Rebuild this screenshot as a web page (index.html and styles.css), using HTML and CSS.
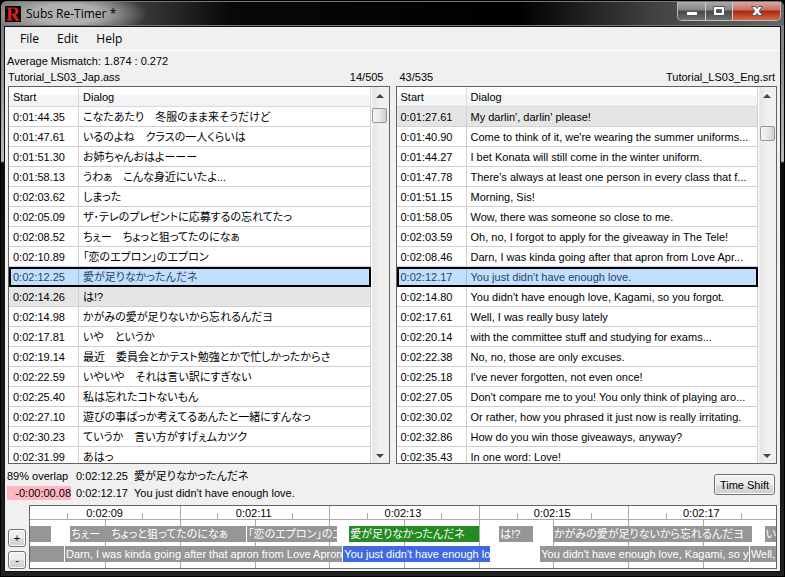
FILE: index.html
```html
<!DOCTYPE html>
<html lang="en">
<head>
<meta charset="utf-8">
<title>Subs Re-Timer *</title>
<link rel="stylesheet" href="styles.css">
</head>
<body>
<div class="window">
  <header class="titlebar">
    <svg class="logo" viewBox="0 0 16 16" aria-hidden="true"><rect width="16" height="16" fill="#050505"/><path d="M1.5 1.500H9c3 0 4.500 1.300 4.500 3.500 0 2-1.200 3.200-3 3.600l3.300 5.200H15v.9h-4.200L7.200 8.900H6.200v4.900h1.600v.9H1.500v-.9h1.700V2.400H1.500zM6.200 2.400V8h1.600c1.900 0 2.700-1 2.700-2.900S9.700 2.400 7.900 2.400z" fill="#e21b1b"/></svg>
    <h1 class="title">Subs Re-Timer *</h1>
    <div class="caption-buttons">
      <button class="cap" aria-label="Minimize"><svg width="12" height="12" viewBox="0 0 12 12"><rect x=".5" y="6.500" width="11" height="4" fill="#fff" stroke="#535666"/></svg></button>
      <button class="cap cap-max" aria-label="Maximize"><svg width="12" height="12" viewBox="0 0 12 12"><path d="M.5 1.500h11v9H.5zM3.500 4.500v3h5v-3z" fill="#fff" fill-rule="evenodd" stroke="#535666"/></svg></button>
      <button class="cap cap-close" aria-label="Close"><svg width="14" height="12" viewBox="0 0 14 12"><path d="M1.500 1.500h3.700L7 3.600l1.800-2.100h3.700L9.200 6l3.300 4.500H8.800L7 8.400l-1.800 2.100H1.500L4.800 6z" fill="#fff" stroke="#535666"/></svg></button>
    </div>
  </header>
  <main class="client">
    <nav class="menu">
      <button>File</button><button>Edit</button><button>Help</button>
    </nav>
    <p class="mismatch">Average Mismatch: 1.874 : 0.272</p>
    <div class="panes">
      <section class="pane">
        <div class="pane-head"><span>Tutorial_LS03_Jap.ass</span><span class="count">14/505</span></div>
        <div class="grid">
          <div class="rows">
            <table lang="ja">
              <thead><tr><th class="start">Start</th><th>Dialog</th></tr></thead>
              <tbody>
                <tr><td>0:01:44.35</td><td>こなたあたり　冬服のまま来そうだけど</td></tr>
                <tr><td>0:01:47.61</td><td>いるのよね　クラスの一人くらいは</td></tr>
                <tr><td>0:01:51.30</td><td>お姉ちゃんおはよーーー</td></tr>
                <tr><td>0:01:58.13</td><td>うわぁ　こんな身近にいたよ...</td></tr>
                <tr><td>0:02:03.62</td><td>しまった</td></tr>
                <tr><td>0:02:05.09</td><td>ザ･テレのプレゼントに応募するの忘れてたっ</td></tr>
                <tr><td>0:02:08.52</td><td>ちぇー　ちょっと狙ってたのになぁ</td></tr>
                <tr><td>0:02:10.89</td><td>「恋のエプロン」のエプロン</td></tr>
                <tr class="selected"><td>0:02:12.25</td><td>愛が足りなかったんだネ</td></tr>
                <tr class="marked"><td>0:02:14.26</td><td>は!?</td></tr>
                <tr><td>0:02:14.98</td><td>かがみの愛が足りないから忘れるんだヨ</td></tr>
                <tr><td>0:02:17.81</td><td>いや　というか</td></tr>
                <tr><td>0:02:19.14</td><td>最近　委員会とかテスト勉強とかで忙しかったからさ</td></tr>
                <tr><td>0:02:22.59</td><td>いやいや　それは言い訳にすぎない</td></tr>
                <tr><td>0:02:25.40</td><td>私は忘れたコトないもん</td></tr>
                <tr><td>0:02:27.10</td><td>遊びの事ばっか考えてるあんたと一緒にすんなっ</td></tr>
                <tr><td>0:02:30.23</td><td>ていうか　言い方がすげぇムカツク</td></tr>
                <tr><td>0:02:31.99</td><td>あはっ</td></tr>
              </tbody>
            </table>
          </div>
          <div class="scroll"><i class="up"></i><i class="thumb"></i><i class="down"></i></div>
        </div>
      </section>
      <section class="pane">
        <div class="pane-head"><span class="count">43/535</span><span>Tutorial_LS03_Eng.srt</span></div>
        <div class="grid">
          <div class="rows">
            <table>
              <thead><tr><th class="start">Start</th><th>Dialog</th></tr></thead>
              <tbody>
                <tr class="marked"><td>0:01:27.61</td><td>My darlin', darlin' please!</td></tr>
                <tr><td>0:01:40.90</td><td>Come to think of it, we're wearing the summer uniforms...</td></tr>
                <tr><td>0:01:44.27</td><td>I bet Konata will still come in the winter uniform.</td></tr>
                <tr><td>0:01:47.78</td><td>There's always at least one person in every class that f...</td></tr>
                <tr><td>0:01:51.15</td><td>Morning, Sis!</td></tr>
                <tr><td>0:01:58.05</td><td>Wow, there was someone so close to me.</td></tr>
                <tr><td>0:02:03.59</td><td>Oh, no, I forgot to apply for the giveaway in The Tele!</td></tr>
                <tr><td>0:02:08.46</td><td>Darn, I was kinda going after that apron from Love Apr...</td></tr>
                <tr class="selected"><td>0:02:12.17</td><td>You just didn't have enough love.</td></tr>
                <tr><td>0:02:14.80</td><td>You didn't have enough love, Kagami, so you forgot.</td></tr>
                <tr><td>0:02:17.61</td><td>Well, I was really busy lately</td></tr>
                <tr><td>0:02:20.14</td><td>with the committee stuff and studying for exams...</td></tr>
                <tr><td>0:02:22.38</td><td>No, no, those are only excuses.</td></tr>
                <tr><td>0:02:25.18</td><td>I've never forgotten, not even once!</td></tr>
                <tr><td>0:02:27.05</td><td>Don't compare me to you! You only think of playing aro...</td></tr>
                <tr><td>0:02:30.02</td><td>Or rather, how you phrased it just now is really irritating.</td></tr>
                <tr><td>0:02:32.86</td><td>How do you win those giveaways, anyway?</td></tr>
                <tr><td>0:02:35.43</td><td>In one word: Love!</td></tr>
              </tbody>
            </table>
          </div>
          <div class="scroll scroll-lower"><i class="up"></i><i class="thumb"></i><i class="down"></i></div>
        </div>
      </section>
    </div>
    <section class="status">
      <div class="facts">
        <span>89% overlap</span><span>0:02:12.25</span><span class="line" lang="ja">愛が足りなかったんだネ</span>
        <span class="offset">-0:00:00.08</span><span>0:02:12.17</span><span class="line">You just didn't have enough love.</span>
      </div>
      <button class="btn shift">Time Shift</button>
    </section>
    <section class="timeline">
      <div class="zoom">
        <button class="btn">+</button>
        <button class="btn">-</button>
      </div>
      <div class="track">
        <svg class="lines" width="100%" height="100%" aria-hidden="true">
          <g stroke="#aaa" stroke-width="1" shape-rendering="crispEdges">
            <line x1="0" x2="100%" y1="13.500" y2="13.500"/>
            <line x1="5%" x2="5%" y1="7" y2="13"/><line x1="15.100%" x2="15.100%" y1="7" y2="13"/>
            <line x1="25.100%" x2="25.100%" y1="7" y2="13"/><line x1="35.200%" x2="35.200%" y1="7" y2="13"/>
            <line x1="45.200%" x2="45.200%" y1="7" y2="13"/><line x1="55.200%" x2="55.200%" y1="7" y2="13"/>
            <line x1="65.300%" x2="65.300%" y1="7" y2="13"/><line x1="75.300%" x2="75.300%" y1="7" y2="13"/>
            <line x1="85.300%" x2="85.300%" y1="7" y2="13"/><line x1="95.400%" x2="95.400%" y1="7" y2="13"/>
            <line x1="20.200%" x2="20.200%" y1="0" y2="100%"/><line x1="40.200%" x2="40.200%" y1="0" y2="100%"/>
            <line x1="60.200%" x2="60.200%" y1="0" y2="100%"/><line x1="80.200%" x2="80.200%" y1="0" y2="100%"/>
            <line x1="10.100%" x2="10.100%" y1="13" y2="100%"/><line x1="30.200%" x2="30.200%" y1="13" y2="100%"/>
            <line x1="50.200%" x2="50.200%" y1="13" y2="100%"/><line x1="70.200%" x2="70.200%" y1="13" y2="100%"/>
            <line x1="90.300%" x2="90.300%" y1="13" y2="100%"/>
          </g>
        </svg>
        <div class="ruler"><span>0:02:09</span><span>0:02:11</span><span>0:02:13</span><span>0:02:15</span><span>0:02:17</span></div>
        <div class="lane" lang="ja">
          <span class="clip" style="left:0%;width:2.8%"></span>
          <span class="clip" style="left:5.4%;width:23.6%">ちぇー　ちょっと狙ってたのになぁ</span>
          <span class="clip" style="left:29.1%;width:12.1%">「恋のエプロン」のエ</span>
          <span class="clip green" style="left:42.8%;width:17.4%">愛が足りなかったんだネ</span>
          <span class="clip" style="left:62.9%;width:4.5%">は!?</span>
          <span class="clip" style="left:70.1%;width:26.7%">かがみの愛が足りないから忘れるんだヨ</span>
          <span class="clip" style="left:98.5%;width:1.5%">い</span>
        </div>
        <div class="lane">
          <span class="clip" style="left:0%;width:4.6%"></span>
          <span class="clip" style="left:4.7%;width:37.1%">Darn, I was kinda going after that apron from Love Apron</span>
          <span class="clip blue" style="left:42%;width:19.7%">You just didn't have enough lo</span>
          <span class="clip" style="left:68.4%;width:28%">You didn't have enough love, Kagami, so y</span>
          <span class="clip" style="left:96.5%;width:3.5%">Well,</span>
        </div>
      </div>
    </section>
  </main>
</div>
</body>
</html>
```

FILE: styles.css
```css
* { box-sizing: border-box; }

body {
  margin: 0;
  font: 11px/16px "Liberation Sans", "Noto Sans CJK JP", sans-serif;
  color: #000;
  background: #000;
}

[lang="ja"] { font-feature-settings: "palt"; }

button { font: inherit; color: inherit; padding: 0; margin: 0; }

.window {
  display: flex;
  flex-direction: column;
  height: 100vh;
  padding: 0 3px 4px;
  border: 1px solid #000;
  border-radius: 7px 7px 0 0;
  background: linear-gradient(#777 0, #8a8a8a 60px, #bbb 160px, #0c0c0c 162px, #222 100%);
  overflow: hidden;
}

.titlebar {
  display: flex;
  align-items: center;
  height: 25px;
  flex: none;
  margin: 0 -3px;
  padding: 0 3px 0 4px;
  border-top: 1px solid #777;
  border-bottom: 1px solid #777;
  background:
    radial-gradient(ellipse 80px 24px at 66px 12px, #b0b0b0 40%, transparent 100%),
    linear-gradient(90deg, #777 0, #444 120px, #080808 230px, #000 66%, #444 84%, #666 100%);
}

.logo { width: 16px; height: 16px; }

.title {
  flex: 1;
  margin: 0 0 0 5px;
  font: 12px/16px "Open Sans", sans-serif;
}

.caption-buttons {
  display: flex;
  align-self: flex-start;
  border: 1px solid #bbb;
  border-top: 0;
  border-radius: 0 0 5px 5px;
  overflow: hidden;
}

.cap {
  display: flex;
  align-items: center;
  justify-content: center;
  width: 28px;
  height: 18px;
  border: 0;
  border-right: 1px solid #ccc;
  background: linear-gradient(#aaa 0, #858585 45%, #454545 50%, #707070 100%);
}

.cap-max { width: 27px; }

.cap-close {
  width: 47px;
  border-right: 0;
  background: linear-gradient(#dca69c 0, #c8705f 45%, #a82410 50%, #d8684a 100%);
}

.client {
  display: flex;
  flex-direction: column;
  flex: 1;
  min-height: 0;
  border: 1px solid #111;
  padding: 0 3px 2px 2px;
  background: #f0f0f0;
}

.menu {
  display: flex;
  gap: 18px;
  height: 24px;
  flex: none;
  margin: 0 -3px 2px -2px;
  padding: 0 15px;
  border-bottom: 1px solid #fff;
}

.menu button {
  border: 0;
  background: none;
  font: 12px/22px "Open Sans", sans-serif;
}

.mismatch { margin: 0; }

.panes {
  display: grid;
  grid-template-columns: 1fr 1fr;
  gap: 6px;
  flex: 1;
  min-height: 0;
  padding-left: 1px;
}

.pane { display: flex; flex-direction: column; min-width: 0; min-height: 0; }

.pane-head {
  display: flex;
  justify-content: space-between;
  height: 17px;
  flex: none;
  padding: 0 2px 0 0;
}

.count { padding: 0 4px; }

.grid {
  display: flex;
  flex: 1;
  min-height: 0;
  border: 1px solid #646464;
  background: #fff;
}

.rows { flex: 1; min-width: 0; overflow: hidden; }

table {
  width: 100%;
  table-layout: fixed;
  border-collapse: separate;
  border-spacing: 0;
}

th, td {
  height: 20px;
  padding: 0 0 0 4px;
  border-bottom: 1px solid #d0d0d0;
  border-right: 1px solid #d0d0d0;
  line-height: 16px;
  text-align: left;
  font-weight: normal;
  white-space: nowrap;
  overflow: hidden;
}

th {
  border-color: #d8dade;
  background: linear-gradient(#fff 0, #fff 40%, #f5f6f8 45%, #f1f2f4 100%);
}

.start { width: 70px; }

.marked td { background: #e5e5e5; }

.selected td {
  background: #c2dfff;
  color: #2b4460;
  border: 0;
  box-shadow: inset 0 2px #000, inset 0 -2px #000;
}

.selected td:first-child {
  box-shadow: inset 0 2px #000, inset 0 -2px #000, inset 2px 0 #000, inset -1px 0 #9fb9d6;
}

.selected td:last-child {
  box-shadow: inset 0 2px #000, inset 0 -2px #000, inset -2px 0 #000;
}

.scroll {
  display: flex;
  flex-direction: column;
  align-items: center;
  width: 18px;
  padding: 7px 1px 5px;
  background: linear-gradient(90deg, #fff 0, #e6e6e6 2px, #f0f0f0 50%);
}

.up, .down { border: 4px solid transparent; flex: none; }
.up { border-top: 0; border-bottom: 4px solid #444; }
.down { border-bottom: 0; border-top: 4px solid #444; margin-top: auto; }

.thumb {
  width: 15px;
  height: 15px;
  flex: none;
  margin-top: 10px;
  border: 1px solid #979797;
  border-radius: 2px;
  background: linear-gradient(90deg, #f5f5f5, #e8e8e8 50%, #cfcfcf);
}

.scroll-lower .thumb { margin-top: 28px; }

.status {
  display: flex;
  align-items: center;
  justify-content: space-between;
  flex: none;
  height: 41px;
  padding: 0 2px 0 0;
}

.facts {
  display: grid;
  grid-template-columns: 64px 53px auto;
  gap: 3px 5px;
  line-height: 14px;
}

.offset { background: #ffb6c1; text-align: right; }

.btn {
  border: 1px solid #707070;
  border-radius: 3px;
  box-shadow: inset 0 0 0 1px #fcfcfc;
  background: linear-gradient(#f2f2f2 0, #ebebeb 50%, #dddddd 50%, #cfcfcf 100%);
}

.shift { width: 61px; height: 21px; }

.timeline { display: flex; gap: 3px; flex: none; height: 64px; padding-left: 1px; }

.zoom { display: flex; flex-direction: column; justify-content: flex-end; gap: 4px; }

.zoom .btn { width: 18px; height: 18px; line-height: 14px; }

.track {
  position: relative;
  flex: 1;
  min-width: 0;
  border: 1px solid #646464;
  background: #fff;
  overflow: hidden;
}

.lines { position: absolute; inset: 0; }

.ruler {
  display: grid;
  grid-template-columns: repeat(5, 20%);
  height: 20px;
  line-height: 14px;
  text-align: center;
}

.ruler span { position: relative; }

.lane { position: relative; height: 16px; margin-bottom: 4px; overflow: hidden; }

.clip {
  position: absolute;
  height: 16px;
  padding-left: 1px;
  background: #969696;
  color: #fff;
  line-height: 16px;
  white-space: nowrap;
  overflow: hidden;
}

.green { background: #228b22; }
.blue { background: #4169e1; }
```
